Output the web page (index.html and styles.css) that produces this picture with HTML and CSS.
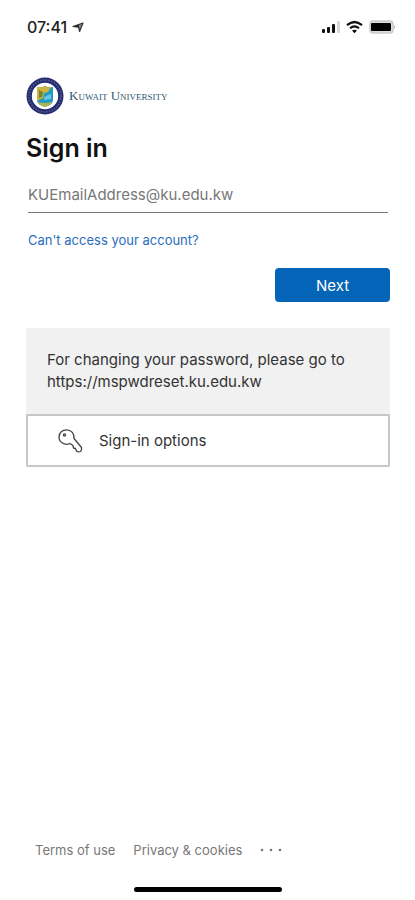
FILE: index.html
```html
<!DOCTYPE html>
<html lang="en">
<head>
<meta charset="utf-8">
<meta name="viewport" content="width=device-width, initial-scale=1">
<title>Sign in</title>
<link rel="stylesheet" href="styles.css">
</head>
<body>
<header class="status">
  <div class="clock">
    <time>07:41</time>
    <svg class="location" width="12" height="11" viewBox="0 0 12 11" aria-hidden="true"><path d="M1 4.500 11 1 7.600 9.500 6.600 5.200Z" fill="#888" stroke="#333" stroke-width="1.200" stroke-linejoin="round"/><path d="M1 4.500 7 2.500 6.600 5.200Z" fill="#222"/></svg>
  </div>
  <div class="indicators">
    <svg width="19" height="14" viewBox="0 0 19 14" aria-hidden="true">
      <g fill="#111"><rect x="1" y="9" width="3" height="4" rx="1"/><rect x="6" y="7" width="3" height="6" rx="1"/><rect x="11" y="4" width="3" height="9" rx="1"/></g>
      <rect x="16" y="1" width="3" height="12" rx="1" fill="#d9d9d9"/>
    </svg>
    <svg width="17" height="14" viewBox="0 0 17 14" aria-hidden="true">
      <path d="M1 5.200Q8.500-1.200 16 5.200M4 8.300Q8.500 4.300 13 8.300" fill="none" stroke="#111" stroke-width="2.200"/>
      <path d="M6 10.600Q8.500 8.700 11 10.600L8.500 13.200Z" fill="#111"/>
    </svg>
    <svg width="28" height="14" viewBox="0 0 28 14" aria-hidden="true">
      <rect x="1" y="1" width="23" height="12" rx="3" fill="#ddd" stroke="#ccc" stroke-width="1.500"/>
      <rect x="2" y="3" width="20" height="8" rx="1" fill="#000"/>
      <path d="M25 5q2 2 0 4z" fill="#aaa"/>
    </svg>
  </div>
</header>
<main class="page">
  <div class="brand">
    <svg width="38" height="38" viewBox="0 0 38 38" aria-hidden="true">
      <circle cx="19" cy="19" r="18.500" fill="#252d70"/>
      <circle cx="19" cy="19" r="16" fill="none" stroke="#59618f" stroke-width="1.600" stroke-dasharray="1.300 1.500"/>
      <circle cx="19" cy="19" r="13.200" fill="#fff"/>
      <path d="M11 10q4 1 8-1 4 2 8 1v13q0 5-8 7-8-2-8-7z" fill="#239bc5"/>
      <path d="M11 10q4 1 8-1 3 2 6 1l-3 5-4 1-1 5-6 3z" fill="#cdb43a"/>
      <path d="M13 13l4 2-1 5-3 1z" fill="#75813b"/>
      <path d="M18 20l7-3v5l-7 1z" fill="#68c7e2"/>
      <path d="M11.500 25q7 2 15 0-2 3-7.500 5-6-2-7.500-5z" fill="#adb551"/>
    </svg>
    <span class="wordmark">Kuwait University</span>
  </div>
  <h1>Sign in</h1>
  <form class="signin">
    <input class="email" type="email" aria-label="Email address" placeholder="KUEmailAddress@ku.edu.kw">
    <a class="help" href="#">Can't access your account?</a>
    <button class="next" type="button">Next</button>
  </form>
  <p class="notice">For changing your password, please go to https://mspwdreset.ku.edu.kw</p>
  <button class="options" type="button">
    <svg width="26" height="26" viewBox="0 0 26 26" fill="none" stroke="#444" stroke-width="1.300" stroke-linejoin="round" aria-hidden="true">
      <path d="M17 10.500 24.500 19.500Q25 22 23.500 23.500 21 24.500 19.500 23L18.500 20.500 16.500 20 16 17.500 13 15.500C7.500 18 2 14 2 9 2 4.500 5.500 1.800 9.500 1.800 14.500 1.800 17.500 6 17 10.500Z"/>
      <circle cx="7.500" cy="7" r="1.100"/>
    </svg>
    <span>Sign-in options</span>
  </button>
</main>
<footer class="footer">
  <a href="#">Terms of use</a>
  <a href="#">Privacy &amp; cookies</a>
  <button class="more" type="button" aria-label="More"><svg width="22" height="4" viewBox="0 0 22 4" fill="#777" aria-hidden="true"><circle cx="2" cy="2" r="1.300"/><circle cx="11" cy="2" r="1.300"/><circle cx="20" cy="2" r="1.300"/></svg></button>
</footer>
<div class="home"></div>
</body>
</html>
```
FILE: styles.css
```css
* { box-sizing: border-box; }
body {
  margin: 0;
  min-height: 100vh;
  display: flex;
  flex-direction: column;
  background: #fff;
  color: #333;
  font-family: Inter, "Liberation Sans", sans-serif;
  font-size: 15px;
}
a { text-decoration: none; }
button { font: inherit; cursor: pointer; }
svg { display: block; flex: none; }
.status {
  display: flex;
  justify-content: space-between;
  align-items: center;
  height: 54px;
  padding: 0 18px 0 27px;
}
.clock { display: flex; align-items: center; gap: 5px; font-size: 16px; font-weight: 500; color: #222; }
.indicators { display: flex; align-items: center; gap: 6px; }
.page { display: flex; flex-direction: column; padding: 23px 25px 0 26px; }
.brand { display: flex; align-items: center; gap: 5px; }
.wordmark {
  font-family: "Liberation Serif", serif;
  font-size: 13px;
  font-variant: small-caps;
  color: #2d5870;
}
h1 { margin: 17px 0 0; font-size: 25px; line-height: 32px; font-weight: 600; color: #111; }
.signin { display: flex; flex-direction: column; padding-left: 2px; }
.email {
  height: 36px;
  margin: 13px 2px 0 0;
  padding: 0;
  border: 0;
  border-bottom: 1px solid #777;
  border-radius: 0;
  outline: 0;
  background: none;
  font: inherit;
  color: #333;
}
.email::placeholder { color: #777; opacity: 1; }
.help { align-self: flex-start; margin-top: 17px; font-size: 13px; line-height: 20px; color: #2a6dbd; }
.next {
  align-self: flex-end;
  width: 115px;
  height: 34px;
  margin-top: 18px;
  padding: 0;
  border: 0;
  border-radius: 4px;
  background: #0464b8;
  color: #fff;
}
.notice {
  margin: 26px 0 0;
  padding: 21px;
  background: #f1f1f1;
  line-height: 22px;
}
.options {
  display: flex;
  align-items: center;
  gap: 16px;
  height: 53px;
  padding: 0 29px;
  border: 2px solid #c8c8c8;
  border-radius: 1px;
  background: #fff;
  color: #333;
}
.footer {
  display: flex;
  align-items: center;
  gap: 18px;
  margin-top: auto;
  padding: 0 35px;
  font-size: 13px;
  line-height: 20px;
}
.footer a { color: #777; }
.more { padding: 0; border: 0; background: none; }
.home { width: 148px; height: 5px; margin: 27px auto 8px; border-radius: 3px; background: #000; }
```
